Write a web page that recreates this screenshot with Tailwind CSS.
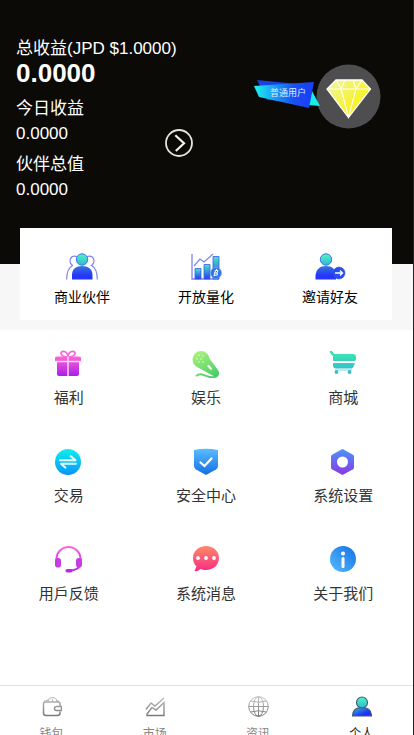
<!DOCTYPE html>
<html lang="zh-CN">
<head>
<meta charset="utf-8">
<meta name="viewport" content="width=device-width, initial-scale=1">
<title>个人</title>
<script src="https://cdn.jsdelivr.net/npm/@tailwindcss/browser@4"></script>
</head>
<body class="h-screen overflow-hidden flex flex-col border-r border-[#222] bg-white font-['Liberation_Sans','Noto_Sans_CJK_SC',sans-serif]">
<svg class="absolute size-0" aria-hidden="true">
  <defs>
    <linearGradient id="person" x1="0" y1="0" x2="0" y2="1"><stop offset="0" stop-color="#4df7c8"/><stop offset="1" stop-color="#32b6cf"/></linearGradient>
    <linearGradient id="torso" x1="0" y1="0" x2="0" y2="1"><stop offset="0" stop-color="#3478d8"/><stop offset=".7" stop-color="#2536fb"/></linearGradient>
    <linearGradient id="bar" x1="0" y1="0" x2="0" y2="1"><stop offset="0" stop-color="#45e8c8"/><stop offset="1" stop-color="#263cf5"/></linearGradient>
    <linearGradient id="pink" x1="0" y1="0" x2="0" y2="1"><stop offset="0" stop-color="#ff66d6"/><stop offset="1" stop-color="#a91ee8"/></linearGradient>
    <linearGradient id="pinkLine" gradientUnits="userSpaceOnUse" x1="0" y1="0" x2="0" y2="27"><stop offset="0" stop-color="#ff66dc"/><stop offset="1" stop-color="#b01eea"/></linearGradient>
    <linearGradient id="green" gradientUnits="userSpaceOnUse" x1="4" y1="0" x2="20" y2="28"><stop offset="0" stop-color="#b2f47c"/><stop offset="1" stop-color="#48ce68"/></linearGradient>
    <linearGradient id="teal" gradientUnits="userSpaceOnUse" x1="0" y1="0" x2="0" y2="24"><stop offset="0" stop-color="#3eebac"/><stop offset="1" stop-color="#30b8d0"/></linearGradient>
    <linearGradient id="cyan" x1="0" y1="0" x2="0" y2="1"><stop offset="0" stop-color="#0cf0ee"/><stop offset="1" stop-color="#0894fa"/></linearGradient>
    <linearGradient id="blue" x1="0" y1="0" x2="0" y2="1"><stop offset="0" stop-color="#5abcff"/><stop offset="1" stop-color="#146ee4"/></linearGradient>
    <linearGradient id="violet" x1="0" y1="0" x2="0" y2="1"><stop offset="0" stop-color="#4c94fa"/><stop offset="1" stop-color="#8a38e4"/></linearGradient>
    <linearGradient id="coral" x1="0" y1="0" x2="0" y2="1"><stop offset="0" stop-color="#ff8a68"/><stop offset="1" stop-color="#f82c84"/></linearGradient>
    <linearGradient id="sky" x1="0" y1="1" x2="1" y2="0"><stop offset="0" stop-color="#58bcff"/><stop offset="1" stop-color="#1470e4"/></linearGradient>
    <linearGradient id="ribbon" x1="0" y1="0" x2="1" y2="0"><stop offset="0" stop-color="#1cf4f0"/><stop offset=".65" stop-color="#1a50f4"/><stop offset="1" stop-color="#1a3cf4"/></linearGradient>
    <linearGradient id="gem" x1="0" y1="0" x2="1" y2="1"><stop offset="0" stop-color="#f0f4a8"/><stop offset=".6" stop-color="#f8f232"/><stop offset="1" stop-color="#f8ee20"/></linearGradient>
    <linearGradient id="gray" gradientUnits="userSpaceOnUse" x1="0" y1="0" x2="0" y2="21"><stop offset="0" stop-color="#c4c4c4"/><stop offset="1" stop-color="#747474"/></linearGradient>
    <linearGradient id="me" x1="0" y1="0" x2="1" y2="1"><stop offset="0" stop-color="#30c4d8"/><stop offset=".7" stop-color="#1c30fa"/></linearGradient>
  </defs>
</svg>

<main class="flex-1 min-h-0 overflow-hidden">
  <header class="bg-[#0b0a06] text-white pt-9 pb-[62px] pl-4 pr-8 flex justify-between items-start">
    <div class="text-[17px] leading-[25px]">
      <p>总收益(JPD $1.0000)</p>
      <p class="text-[26px] font-bold">0.0000</p>
      <div class="flex items-center justify-between w-[177px] mt-[10px]">
        <dl>
          <dt>今日收益</dt>
          <dd>0.0000</dd>
          <dt class="mt-[6px]">伙伴总值</dt>
          <dd>0.0000</dd>
        </dl>
        <button type="button" aria-label="查看收益" class="mb-3">
          <svg class="block size-7" viewBox="0 0 28 28" fill="none"><circle cx="14" cy="14" r="13" stroke="#e8e2dc" stroke-width="1.8"/><path d="M10.3 6.2L19 14.3L10.8 22" stroke="#f4f2f0" stroke-width="2.2"/></svg>
        </button>
      </div>
    </div>
    <div class="flex mt-7">
      <div class="relative w-[66px] h-[30px] mt-[14px] -mr-1">
        <svg class="block size-full" viewBox="0 0 66 30" aria-hidden="true"><path d="M58 13L66 28L54 27Z" fill="#18ece8"/><path d="M3 2L54 7L50 24L13 22Z" fill="#1a40e0"/><path d="M0 8L60 4L55 30L5 19Z" fill="url(#ribbon)"/></svg>
        <span class="absolute left-4 top-[9px] text-[9px] leading-3 whitespace-nowrap text-[#dcecff]">普通用户</span>
      </div>
      <svg class="block size-[65px]" viewBox="0 0 65 65" role="img" aria-label="头像"><circle cx="32.5" cy="32.5" r="32" fill="#4e4e50"/><path d="M20 16H46L54.500 25L32.500 53.500L11 25Z" fill="url(#gem)" stroke="#fff" stroke-width="1.300"/><path d="M11 25H54M20 16L25 25L32.500 53L40 25L46 16M25 25L29 16M40 25L37 16" fill="none" stroke="#fffff0" stroke-width="1.100"/></svg>
    </div>
  </header>

  <section class="bg-[#f7f7f7] pb-[10px] pl-5 pr-[21px]">
    <div class="relative -top-9 -mb-9 bg-white grid grid-cols-3 pt-[25px] pb-[13px] text-[14px] leading-5 text-black">
      <a href="#partner" class="flex flex-col items-center gap-[6px]">
        <svg class="w-8 h-7" viewBox="0 0 32 28"><g fill="none" stroke="#8084f4" stroke-width="1.200"><path d="M11 3.500C4 1.500 2 9 6.500 12.500C2 15 .6 19 .7 26.500M21 3.500C28 1.500 30 9 25.500 12.500C30 15 31.400 19 31.300 26.500"/></g><circle cx="16" cy="6.500" r="5.700" fill="url(#person)" stroke="#3a72e4"/><path d="M6 26.500V22C6 16 10 13 16 13S26.500 16 26.500 22V26.500Z" fill="url(#torso)"/></svg>
        商业伙伴
      </a>
      <a href="#quant" class="flex flex-col items-center gap-[6px]">
        <svg class="w-8 h-7" viewBox="0 0 32 28"><path d="M2 1V26H29" fill="none" stroke="#7c84f0" stroke-width="1.300"/><g fill="url(#bar)" stroke="#3a5ee8" stroke-width=".8"><path d="M5 15.500H11V26H5Z"/><path d="M14 11.500H20V26H14Z"/><path d="M23 3.500H29V26H23Z"/></g><path d="M4 13L10 6L14 9L23 1" fill="none" stroke="#7c84f4" stroke-width="1.200"/><circle cx="26" cy="20" r="5.500" fill="#2d76dc" stroke="#7ca8f0" stroke-width=".7"/><path d="M25.500 17L24 23M25 17.500H28L27 20H24.500M27 20L27.500 22L24 22.500M26.500 16V17.500" fill="none" stroke="#fff"/></svg>
        开放量化
      </a>
      <a href="#invite" class="flex flex-col items-center gap-[6px]">
        <svg class="w-8 h-7" viewBox="0 0 32 28"><circle cx="12" cy="6.500" r="5.700" fill="url(#person)" stroke="#3a72e4"/><path d="M1.500 26.500V23C2 16 6 13 12 13S22 16 22 23V26.500Z" fill="url(#torso)"/><circle cx="25" cy="20" r="6" fill="#284cf0" stroke="#3654c8" stroke-width=".6"/><path d="M21 20H28M26 17.500L28.500 20L26 22.500" fill="none" stroke="#fff" stroke-width="1.400"/></svg>
        邀请好友
      </a>
    </div>
  </section>

  <nav class="grid grid-cols-3 pr-px text-[15px] leading-5 text-[#333]" aria-label="功能">
    <a href="#welfare" class="flex flex-col items-center gap-[10px] pt-5 pb-5">
      <svg class="size-7" viewBox="0 0 28 28"><path d="M13 7C5 7 4 1 9 1.300C11 1.500 13 4 13 7C13 4 15 1.500 17 1.300C22 1 21 7 13 7" fill="none" stroke="#f868d8" stroke-width="1.700"/><path d="M1.500 6.500H24.500Q26 6.500 26 8V11.500H24V24Q24 26 22 26H4Q2 26 2 24V11.500H0V8Q0 6.500 1.500 6.500Z" fill="url(#pink)"/><path d="M0 11.500H26M13 6.500V26" stroke="#fbd8fa" stroke-width="1.500"/></svg>
      福利
    </a>
    <a href="#fun" class="flex flex-col items-center gap-[10px] pt-5 pb-5">
      <svg class="size-7" viewBox="0 0 28 28"><circle cx="9" cy="9.500" r="8.500" fill="url(#green)"/><path d="M6 17.500L17 8L26 20Q28.500 26.500 21.500 26Z" fill="url(#green)"/><path d="M4 26C10 21 14 28 21 27.300C25 27 27 25 25.500 21" fill="none" stroke="url(#green)" stroke-width="2"/><path d="M16.500 16L19 18.800" stroke="#fff" stroke-width="2.200" stroke-linecap="round"/><g fill="#f4ffe6"><circle cx="7" cy="5.500" r=".7"/><circle cx="11" cy="6" r=".7"/><circle cx="5" cy="9" r=".7"/><circle cx="9" cy="9" r=".7"/><circle cx="7" cy="12" r=".7"/><circle cx="11" cy="12" r=".7"/></g></svg>
      娱乐
    </a>
    <a href="#mall" class="flex flex-col items-center gap-[10px] pt-5 pb-5">
      <svg class="size-7" viewBox="0 0 28 28"><path d="M2 2L5 5.500" stroke="#36dcac" stroke-width="2.500" stroke-linecap="round"/><path d="M4 4H24Q27 4 27 7V9Q27 11 24 11H4Z" fill="url(#teal)"/><path d="M4 13H26L24 17.500Q23.500 18.500 22 18.500H7Q4 18.500 4 15Z" fill="url(#teal)"/><path d="M6 20H23" stroke="#98dfe2" stroke-width="1.200"/><circle cx="7.500" cy="22" r="1.900" fill="#35bfd0"/><circle cx="20.500" cy="22" r="1.900" fill="#35bfd0"/></svg>
      商城
    </a>
    <a href="#trade" class="flex flex-col items-center gap-[10px] pt-5 pb-5">
      <svg class="size-7" viewBox="0 0 28 28"><circle cx="13" cy="14" r="13" fill="url(#cyan)"/><path d="M5 12.300H20.500L15.500 8M21 15.700H6L10.500 19.700" fill="none" stroke="#e6fbff" stroke-width="1.900" stroke-linejoin="round" stroke-linecap="round"/></svg>
      交易
    </a>
    <a href="#security" class="flex flex-col items-center gap-[10px] pt-5 pb-5">
      <svg class="size-7" viewBox="0 0 28 28"><path d="M2 2Q8 .8 14 .8T26 2V18Q26 20 24 21.500L14 27L4 21.500Q2 20 2 18Z" fill="url(#blue)"/><path d="M8.500 14.500L12.500 18L19.500 10.500" fill="none" stroke="#fff" stroke-width="2.200" stroke-linecap="round"/></svg>
      安全中心
    </a>
    <a href="#settings" class="flex flex-col items-center gap-[10px] pt-5 pb-5">
      <svg class="size-7" viewBox="0 0 28 28"><path d="M13 1.200Q13.500 1 14 1.200L24 6.800Q25 7.500 25 8.500V19.500Q25 20.500 24 21.200L14 26.800Q13.500 27 13 26.800L3 21.200Q2 20.500 2 19.500V8.500Q2 7.500 3 6.800Z" fill="url(#violet)"/><circle cx="13.500" cy="14" r="5.500" fill="#fff"/></svg>
      系统设置
    </a>
    <a href="#feedback" class="flex flex-col items-center gap-[10px] pt-5 pb-5">
      <svg class="size-7" viewBox="0 0 28 28"><path d="M1.500 16V13A12 12 0 0 1 25.500 13V18C25 22 20 24.500 14.500 24.500" fill="none" stroke="url(#pinkLine)" stroke-width="2"/><rect x="0" y="12" width="6" height="9.500" rx="2.800" fill="#c83ce6"/><rect x="21" y="12" width="6" height="9.500" rx="2.800" fill="#c83ce6"/><rect x="10.500" y="23" width="7" height="3.400" rx="1.700" fill="#b22ae8"/></svg>
      用戶反馈
    </a>
    <a href="#messages" class="flex flex-col items-center gap-[10px] pt-5 pb-5">
      <svg class="size-7" viewBox="0 0 28 28"><path d="M14 0C21.500 0 27 5 27 12S21.500 24 14 24C12 24 10 23.700 8.500 23C7 24.500 5 25.500 2.500 25L4.500 20.500C2.300 18.500 1 15.500 1 12C1 5 6.500 0 14 0Z" fill="url(#coral)"/><g fill="#fff"><circle cx="6" cy="12" r="1.900"/><circle cx="14" cy="12" r="1.900"/><circle cx="22" cy="12" r="1.900"/></g></svg>
      系统消息
    </a>
    <a href="#about" class="flex flex-col items-center gap-[10px] pt-5 pb-5">
      <svg class="size-7" viewBox="0 0 28 28"><circle cx="14" cy="13" r="13" fill="url(#sky)"/><circle cx="14" cy="7.500" r="2" fill="#fff"/><path d="M14 12.500V20.500" stroke="#fff" stroke-width="3" stroke-linecap="round"/></svg>
      关于我们
    </a>
  </nav>
</main>

<nav class="h-[50px] shrink-0 overflow-hidden border-t border-[#e2e2e2] bg-white grid grid-cols-4 text-[12px] leading-4 text-[#888]" aria-label="主导航">
  <a href="#wallet" class="flex flex-col items-center gap-[9px] pt-[10px]">
    <svg class="size-[21px] shrink-0" viewBox="0 0 21 21" fill="none" stroke="url(#gray)" stroke-width="1.500"><path d="M19 10V8Q19 6 17 6H4Q2.500 6 2.500 8V17Q2.500 19.500 5 19.500H16.500Q19 19.500 19 17V15.500"/><path d="M20.500 10.500H15.500Q13.500 10.500 13.500 12.500T15.500 14.500H20.500Z"/><path d="M3 5.500L7 4M15 4L18 5.500M7 6A4.500 4.500 0 1 1 16 6M11.500 3V6" stroke-width="1.100"/></svg>
    钱包
  </a>
  <a href="#market" class="flex flex-col items-center gap-[9px] pt-[10px]">
    <svg class="size-[21px] shrink-0" viewBox="0 0 21 21" fill="none" stroke="url(#gray)" stroke-width="1.400"><path d="M2 13.500L7 7L11 10L20 2"/><path d="M3 19.500V18L8 11.500L12 14L20 6.500V19.500Z"/></svg>
    市场
  </a>
  <a href="#news" class="flex flex-col items-center gap-[9px] pt-[10px]">
    <svg class="size-[21px] shrink-0" viewBox="0 0 21 21" fill="none" stroke="url(#gray)"><circle cx="10.500" cy="10.500" r="9.800"/><ellipse cx="10.500" cy="10.500" rx="5" ry="9.800"/><path d="M10 .7H11V20.300H10ZM.7 10H20.300V11H.7Z" fill="url(#gray)" stroke="none"/><path d="M2.500 5Q10.500 7.500 18.500 5M2.500 16Q10.500 13.500 18.500 16"/></svg>
    资讯
  </a>
  <a href="#profile" aria-current="page" class="flex flex-col items-center gap-[9px] pt-[10px] text-[#222]">
    <svg class="size-[21px] shrink-0" viewBox="0 0 21 21" stroke="#46586c" stroke-width="1.100"><path d="M1.500 20C1.500 14 5 11.500 11 11.500S20.500 14 20.500 20Z" fill="url(#me)"/><circle cx="11" cy="6.500" r="5.500" fill="url(#person)"/></svg>
    个人
  </a>
</nav>
</body>
</html>
